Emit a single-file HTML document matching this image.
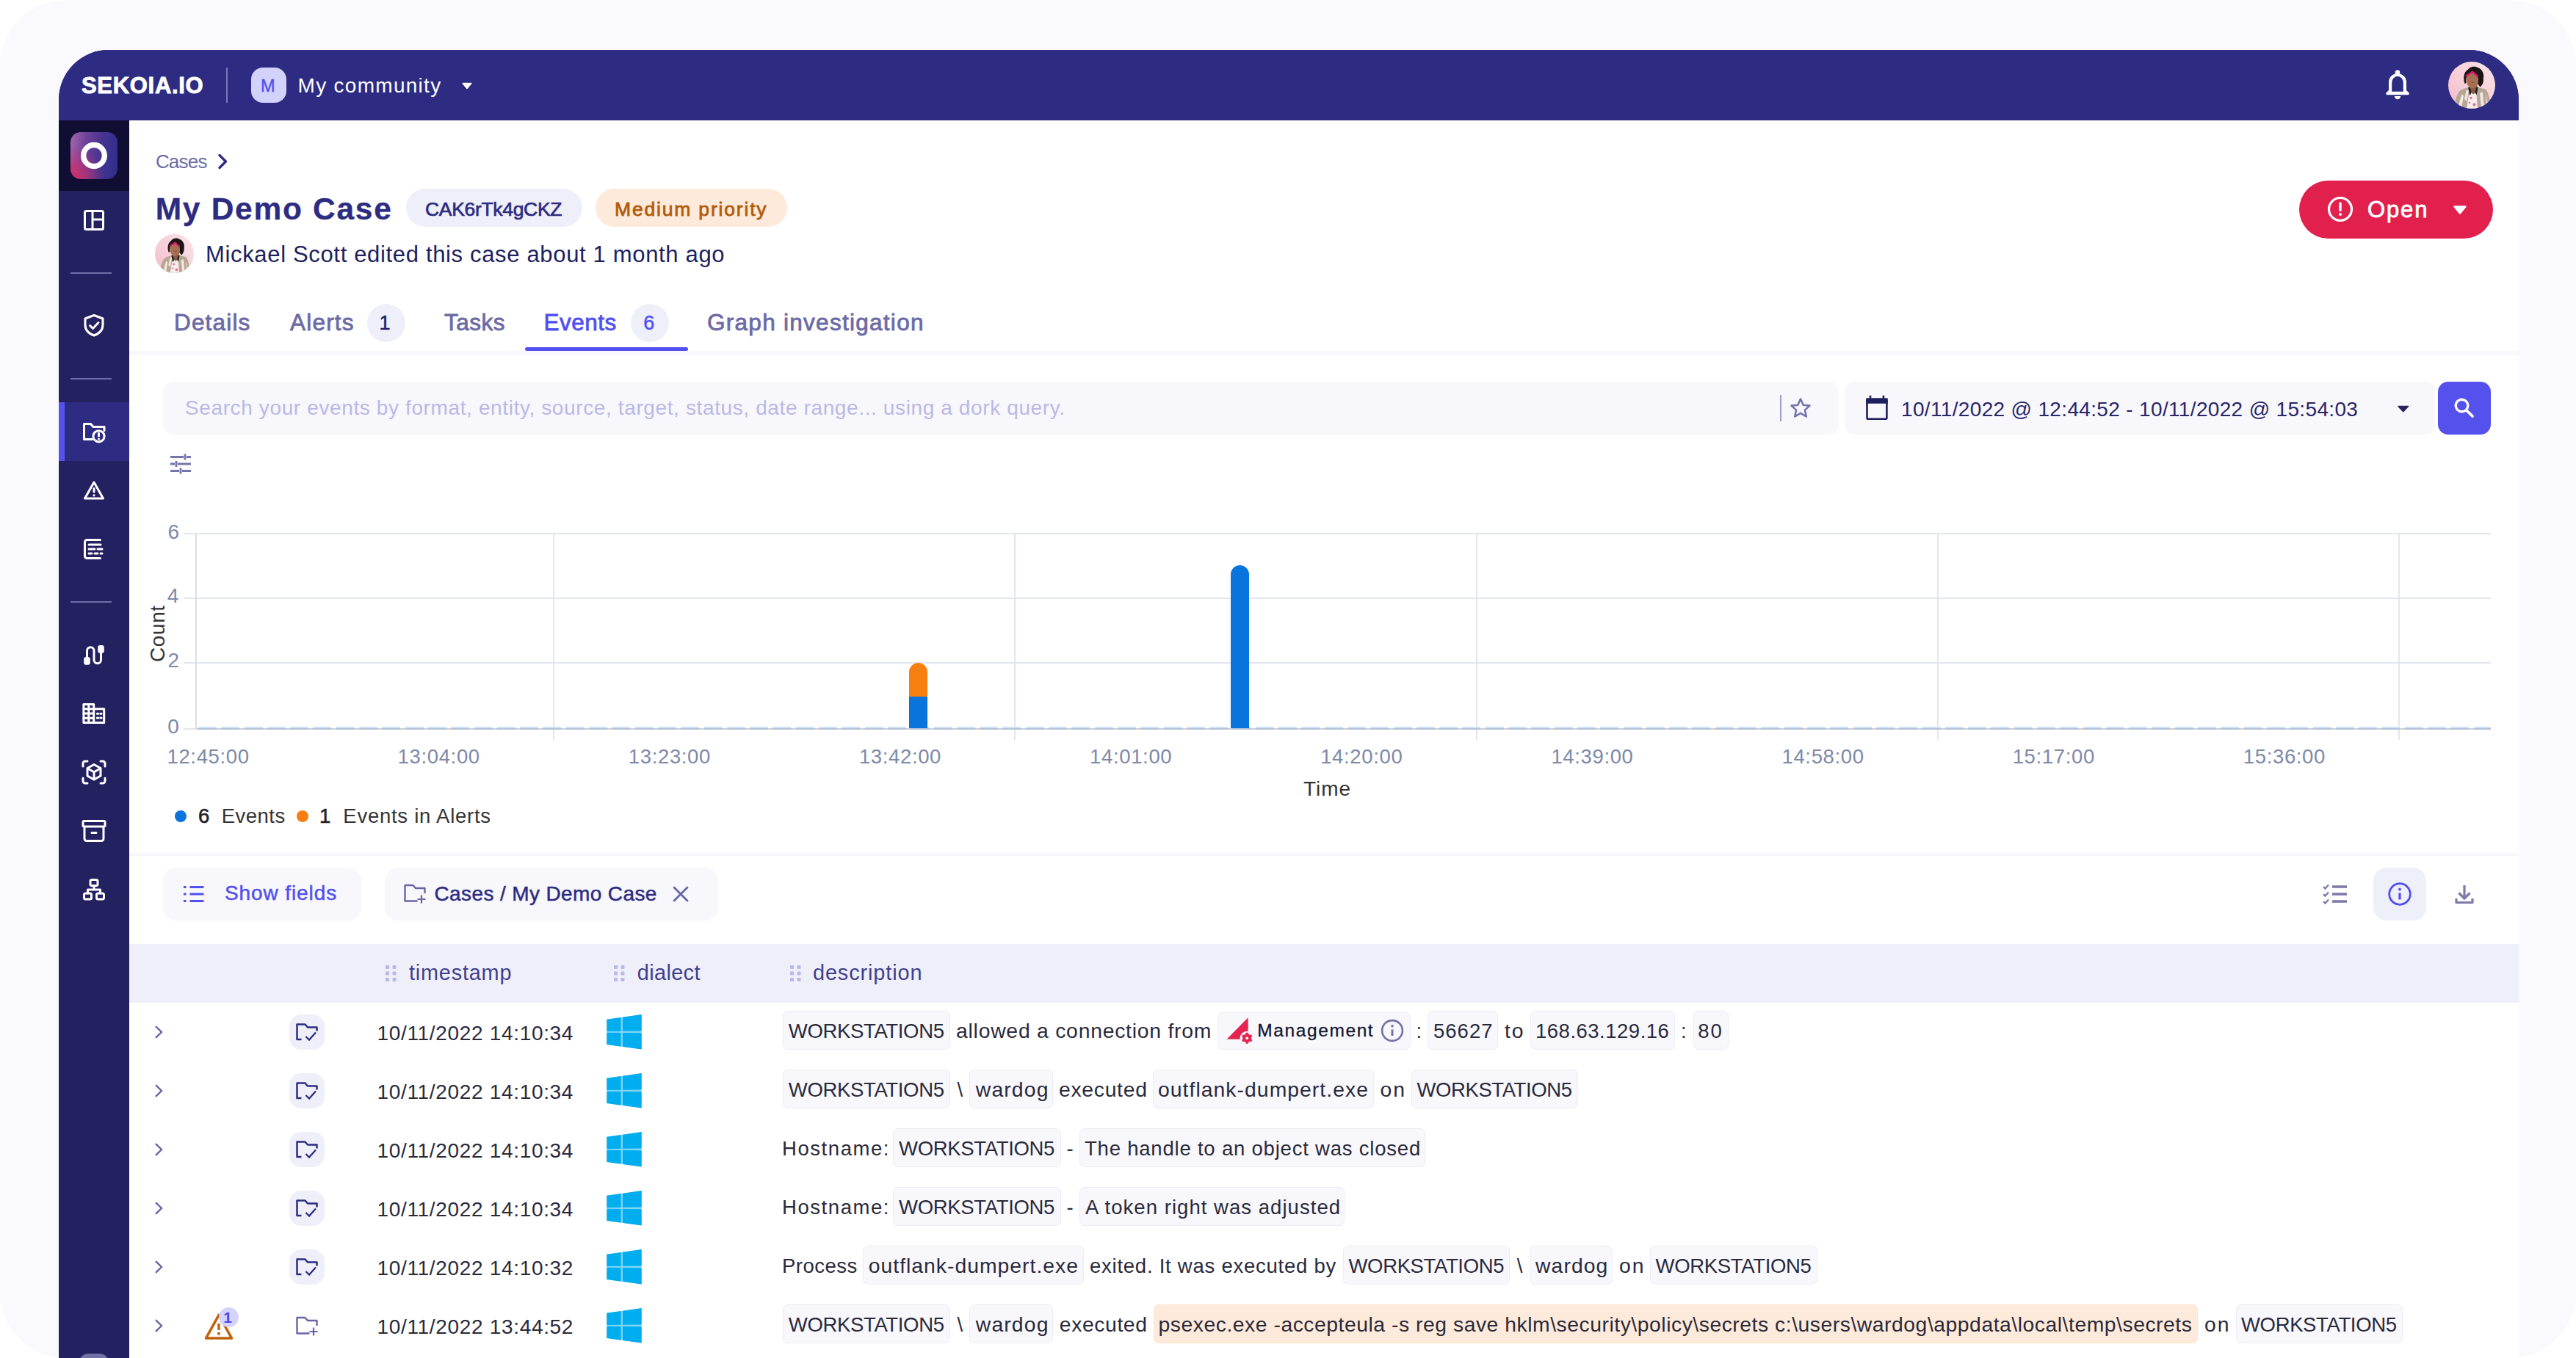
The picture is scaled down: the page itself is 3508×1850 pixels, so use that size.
<!DOCTYPE html>
<html lang="en"><head><meta charset="utf-8"><title>My Demo Case - SEKOIA.IO</title>
<style>
html,body{margin:0;padding:0;background:#fff;}
body{width:3508px;height:1850px;overflow:hidden;position:relative;font-family:'Liberation Sans',sans-serif;}
#stage{position:absolute;left:0;top:0;width:3508px;height:1850px;overflow:hidden;}
#stage div,#stage svg,#stage span{position:absolute;}
.t{white-space:pre;line-height:1;}
</style></head>
<body><div id="stage">
<div style="left:0px;top:0px;width:3508px;height:1850px;background:#fafafe;border-radius:90px;"></div>
<div style="left:80px;top:68px;width:3350px;height:1900px;border-radius:68px 68px 0 0;overflow:hidden;background:linear-gradient(#2d2c82 0,#2d2c82 96px,#fff 96px);">
<div style="left:0;top:0;width:3350px;height:96px;background:#2d2c82;"></div>
<div style="left:0;top:96px;width:96px;height:1800px;background:#232160;"></div>
<div style="left:0;top:96px;width:96px;height:96px;background:#100f33;"></div>
<div style="left:0;top:480px;width:96px;height:80px;background:#2d2c82;"></div>
<div style="left:0;top:480px;width:8px;height:80px;background:#5551ee;"></div>
</div>
<div style="left:308px;top:92px;width:2px;height:48px;background:#7a79b5;"></div>
<div style="left:342px;top:92px;width:48px;height:48px;background:#d3d2fb;border-radius:16px;"></div>
<svg style="left:629px;top:112px;" width="14" height="10" viewBox="0 0 14 10"><path d="M1.2 1.5h11.6L7 8.4z" fill="#fff" stroke="#fff" stroke-width="1.6" stroke-linejoin="round"/></svg>
<svg style="left:3245px;top:92px;" width="40" height="46" viewBox="0 0 40 46"><circle cx="20" cy="6.900" r="3.300" fill="#fff"/><path fill-rule="evenodd" fill="#fff" d="M8 31V20A12 12 0 0 1 32 20V31L35.300 34.300A1.700 1.700 0 0 1 34.100 37.200H5.900A1.700 1.700 0 0 1 4.700 34.300ZM12.200 32.800V20.500A7.800 8.500 0 0 1 27.800 20.500V32.800Z"/><path d="M15.800 39h8.400a4.200 4.200 0 0 1-8.400 0z" fill="#fff"/></svg>
<svg style="left:3334px;top:84px;" width="64" height="64" viewBox="0 0 64 64"><defs><linearGradient id="avg" x1="0" y1="1" x2="1" y2="0"><stop offset="0" stop-color="#f4bccb"/><stop offset=".55" stop-color="#f8d2db"/><stop offset="1" stop-color="#fbe4e9"/></linearGradient><clipPath id="avc"><circle cx="32" cy="32" r="32"/></clipPath></defs><g clip-path="url(#avc)"><rect width="64" height="64" fill="url(#avg)"/><path d="M8 64C9 52 12 42 18 38L27 35H40L51 37.500C55 42 57 52 58 64Z" fill="#b8a695"/><path d="M13 64l5-19 3 1-3 18zM22 51l3-13 3 1-3 15zM45 64l-2-21 4-2 2 23zM51 43l3 15-2 1z" fill="#efe7e0"/><path d="M28 45l5-5 5.500 5 1.500 19H25z" fill="#f7eded"/><circle cx="31" cy="49.500" r="1.700" fill="#e8748f"/><circle cx="35.500" cy="58.500" r="2.200" fill="#e8748f"/><circle cx="29" cy="56" r="1.300" fill="#e8748f"/><path d="M30 30h9.500v10l-5.500 4.500-4.500-4.500z" fill="#8b5842"/><path d="M27 35l2.500 11.500 2.200-4.500-2.200-7.500zM40.700 35l-2 10.500-2.200-4.500 2-6.500z" fill="#1f242b"/><path d="M22.500 30C20 22 21.500 14 26 11.500 29 6.500 36 5.500 40 8 46 9.500 49.500 17 47.800 23 48.500 28 46.500 32 43.500 34.500L40 30C41 24 40 19 37 17L26 19C24 22 24 26 24.500 29Z" fill="#1b1515"/><path d="M24.500 24.500C24.300 18.500 28 15.500 32 15.500 37 15.500 41 19 41 25 41 31 37.500 36.200 33 36.200 28 36.200 24.700 30.500 24.500 24.500Z" fill="#a87052"/><path d="M31 27.500c2 1 4 1 5.500-.5" stroke="#7b4a3a" stroke-width="1" fill="none"/><path d="M23.500 18.800L33 12.300 41.300 19.300 39.800 21.200 33 15.600 25 20.600Z" fill="#d6186f"/></g></svg>
<div style="left:96px;top:180px;width:64px;height:64px;border-radius:14px;background:radial-gradient(circle at 2% 100%,#d32b66 0%,rgba(205,45,105,.8) 14%,rgba(190,55,120,0) 50%),linear-gradient(97deg,#a666ae 0%,#6d4199 32%,#47348f 62%,#2d2d8d 100%);"></div>
<svg style="left:96px;top:180px;" width="64" height="64" viewBox="0 0 64 64"><ellipse cx="32" cy="32" rx="14.300" ry="14.500" fill="none" stroke="#fff" stroke-width="7.300"/></svg>
<svg style="left:112.0px;top:284.0px;" width="32" height="32" viewBox="0 0 32 32"><rect x="3.5" y="3.5" width="25" height="25" rx="2" fill="none" stroke="#fff" stroke-width="3" stroke-linecap="round" stroke-linejoin="round"/><path d="M14 3.5v25M14 15h14.5" fill="none" stroke="#fff" stroke-width="3" stroke-linecap="round" stroke-linejoin="round"/></svg>
<div style="left:96px;top:371px;width:56px;height:2px;background:#6f6ea6;"></div>
<svg style="left:112.0px;top:427.0px;" width="32" height="34" viewBox="0 0 32 34"><path d="M16 2.5l12 4.5v8.5c0 7-5 12-12 14.500c-7-2.500-12-7.500-12-14.500v-8.500z" fill="none" stroke="#fff" stroke-width="3" stroke-linecap="round" stroke-linejoin="round"/><path d="M10.500 16.500l4 4 7.500-8" fill="none" stroke="#fff" stroke-width="3" stroke-linecap="round" stroke-linejoin="round"/></svg>
<div style="left:96px;top:515px;width:56px;height:2px;background:#6f6ea6;"></div>
<svg style="left:111.0px;top:574.0px;" width="34" height="32" viewBox="0 0 34 32"><path d="M14.500 24.500h-11v-21h9l3.500 4h15v5" fill="none" stroke="#fff" stroke-width="3" stroke-linecap="round" stroke-linejoin="round"/><circle cx="23.500" cy="20.300" r="7.600" fill="none" stroke="#fff" stroke-width="3" stroke-linecap="round" stroke-linejoin="round" stroke-width="2.800"/><path d="M23.500 16.300v3.700" fill="none" stroke="#fff" stroke-width="3" stroke-linecap="round" stroke-linejoin="round" stroke-width="2.800"/><circle cx="23.500" cy="24" r="1.500" fill="#fff"/></svg>
<svg style="left:112.0px;top:653.0px;" width="32" height="30" viewBox="0 0 32 30"><path d="M16 4l12.500 22h-25z" fill="none" stroke="#fff" stroke-width="3" stroke-linecap="round" stroke-linejoin="round" stroke-width="3.200"/><path d="M16 12.500v4.500" fill="none" stroke="#fff" stroke-width="3" stroke-linecap="round" stroke-linejoin="round" stroke-width="2.800"/><circle cx="16" cy="21.800" r="1.600" fill="#fff"/></svg>
<svg style="left:112.0px;top:732.0px;" width="32" height="32" viewBox="0 0 32 32"><path d="M24.500 3.500h-18a3 3 0 0 0-3 3v19a3 3 0 0 0 3 3h18" fill="none" stroke="#fff" stroke-width="3" stroke-linecap="round" stroke-linejoin="round"/><path d="M9 10h16M9 16h8M21 16h6M9 22h4M17 22h4M25 22h2" fill="none" stroke="#fff" stroke-width="3" stroke-linecap="round" stroke-linejoin="round" stroke-width="2.600"/></svg>
<div style="left:96px;top:819px;width:56px;height:2px;background:#6f6ea6;"></div>
<svg style="left:112.0px;top:876.0px;" width="32" height="32" viewBox="0 0 32 32"><path d="M6.500 19.500V10.500a4.750 4.750 0 0 1 9.500 0V23a4.750 4.750 0 0 0 9.500 0V13" fill="none" stroke="#fff" stroke-width="3" stroke-linecap="round" stroke-linejoin="round"/><rect x="2.200" y="19" width="8.600" height="10.800" rx="3" fill="#fff"/><rect x="21.200" y="3" width="8.600" height="10.700" rx="3" fill="#fff"/></svg>
<svg style="left:112.0px;top:956.0px;" width="32" height="32" viewBox="0 0 32 32"><path d="M1.900 28.600V3.600h13.800v6.200h14v18.800z" fill="none" stroke="#fff" stroke-width="3" stroke-linecap="round" stroke-linejoin="round" stroke-width="2.800"/><path d="M8.800 3.600v25M1.900 9.850h13.800M1.900 16.100h13.800M1.900 22.350h13.800M15.700 9.800v18.800" fill="none" stroke="#fff" stroke-width="3" stroke-linecap="round" stroke-linejoin="round" stroke-width="2.500"/><path d="M20.300 16.200h1.400M24.700 16.200h1.400M20.300 22h1.400M24.700 22h1.400" fill="none" stroke="#fff" stroke-width="3" stroke-linecap="round" stroke-linejoin="round" stroke-width="2.800"/></svg>
<svg style="left:110.0px;top:1034.0px;" width="36" height="36" viewBox="0 0 36 36"><path d="M3 10v-4a3 3 0 0 1 3-3h3M27 3h3a3 3 0 0 1 3 3v4M33 26v4a3 3 0 0 1-3 3h-3M9 33h-3a3 3 0 0 1-3-3v-4" fill="none" stroke="#fff" stroke-width="3" stroke-linecap="round" stroke-linejoin="round"/><path d="M18 7.500l9 5v10.500l-9 5-9-5v-10.500z" fill="none" stroke="#fff" stroke-width="3" stroke-linecap="round" stroke-linejoin="round"/><path d="M9.500 13l8.500 4.800 8.500-4.800M18 17.800v10" fill="none" stroke="#fff" stroke-width="3" stroke-linecap="round" stroke-linejoin="round"/></svg>
<svg style="left:111.0px;top:1116.0px;" width="34" height="32" viewBox="0 0 34 32"><rect x="2" y="2.500" width="30" height="7.500" rx="1.500" fill="none" stroke="#fff" stroke-width="3" stroke-linecap="round" stroke-linejoin="round"/><path d="M4 10.500v16a3 3 0 0 0 3 3h20a3 3 0 0 0 3-3v-16" fill="none" stroke="#fff" stroke-width="3" stroke-linecap="round" stroke-linejoin="round"/><path d="M14 18.500h6" fill="none" stroke="#fff" stroke-width="3" stroke-linecap="round" stroke-linejoin="round"/></svg>
<svg style="left:112.0px;top:1196.0px;" width="32" height="32" viewBox="0 0 32 32"><rect x="11" y="2.500" width="10" height="8" rx="2" fill="none" stroke="#fff" stroke-width="3" stroke-linecap="round" stroke-linejoin="round"/><rect x="2.500" y="21" width="10" height="8" rx="2" fill="none" stroke="#fff" stroke-width="3" stroke-linecap="round" stroke-linejoin="round"/><rect x="19.500" y="21" width="10" height="8" rx="2" fill="none" stroke="#fff" stroke-width="3" stroke-linecap="round" stroke-linejoin="round"/><path d="M16 10.500v5.500M7.500 21v-5h17v5" fill="none" stroke="#fff" stroke-width="3" stroke-linecap="round" stroke-linejoin="round"/></svg>
<div style="left:107px;top:1844px;width:42px;height:40px;background:#7271a6;border-radius:14px;"></div>
<svg style="left:295px;top:208px;" width="16" height="24" viewBox="0 0 16 24"><path d="M4 3.500l8.500 8.500-8.500 8.500" fill="none" stroke="#2d2c82" stroke-width="3.400" stroke-linecap="round" stroke-linejoin="round"/></svg>
<div style="left:553px;top:257px;width:240px;height:52px;background:#efeffa;border-radius:26px;"></div>
<div style="left:811px;top:257px;width:261px;height:52px;background:#feeadb;border-radius:26px;"></div>
<svg style="left:211px;top:319px;" width="53" height="53" viewBox="0 0 64 64"><defs><linearGradient id="avg2" x1="0" y1="1" x2="1" y2="0"><stop offset="0" stop-color="#f4bccb"/><stop offset=".55" stop-color="#f8d2db"/><stop offset="1" stop-color="#fbe4e9"/></linearGradient><clipPath id="avc2"><circle cx="32" cy="32" r="32"/></clipPath></defs><g clip-path="url(#avc2)"><rect width="64" height="64" fill="url(#avg2)"/><path d="M8 64C9 52 12 42 18 38L27 35H40L51 37.500C55 42 57 52 58 64Z" fill="#b8a695"/><path d="M13 64l5-19 3 1-3 18zM22 51l3-13 3 1-3 15zM45 64l-2-21 4-2 2 23zM51 43l3 15-2 1z" fill="#efe7e0"/><path d="M28 45l5-5 5.500 5 1.500 19H25z" fill="#f7eded"/><circle cx="31" cy="49.500" r="1.700" fill="#e8748f"/><circle cx="35.500" cy="58.500" r="2.200" fill="#e8748f"/><circle cx="29" cy="56" r="1.300" fill="#e8748f"/><path d="M30 30h9.500v10l-5.500 4.500-4.500-4.500z" fill="#8b5842"/><path d="M27 35l2.500 11.500 2.200-4.500-2.200-7.500zM40.700 35l-2 10.500-2.200-4.500 2-6.500z" fill="#1f242b"/><path d="M22.500 30C20 22 21.500 14 26 11.500 29 6.500 36 5.500 40 8 46 9.500 49.500 17 47.800 23 48.500 28 46.500 32 43.500 34.500L40 30C41 24 40 19 37 17L26 19C24 22 24 26 24.500 29Z" fill="#1b1515"/><path d="M24.500 24.500C24.300 18.500 28 15.500 32 15.500 37 15.500 41 19 41 25 41 31 37.500 36.200 33 36.200 28 36.200 24.700 30.500 24.500 24.500Z" fill="#a87052"/><path d="M31 27.500c2 1 4 1 5.500-.5" stroke="#7b4a3a" stroke-width="1" fill="none"/><path d="M23.500 18.800L33 12.300 41.300 19.300 39.800 21.200 33 15.600 25 20.600Z" fill="#d6186f"/></g></svg>
<div style="left:3131px;top:246px;width:264px;height:79px;background:#e1204d;border-radius:40px;"></div>
<svg style="left:3168px;top:266px;" width="38" height="38" viewBox="0 0 38 38"><circle cx="19" cy="19" r="15.500" fill="none" stroke="#fff" stroke-width="3.200"/><path d="M19 11v9.500" stroke="#fff" stroke-width="3.400" stroke-linecap="round"/><circle cx="19" cy="26" r="2" fill="#fff"/></svg>
<svg style="left:3340px;top:279px;" width="20" height="14" viewBox="0 0 20 14"><path d="M2.500 2.500h15L10 11.500z" fill="#fff" stroke="#fff" stroke-width="2.400" stroke-linejoin="round"/></svg>
<div style="left:500px;top:414px;width:52px;height:52px;background:#efeffa;border-radius:26px;"></div>
<div style="left:859px;top:414px;width:52px;height:52px;background:#efeffa;border-radius:26px;"></div>
<div style="left:176px;top:478px;width:3254px;height:6px;background:#f7f7fc;"></div>
<div style="left:715px;top:472.5px;width:222px;height:5.5px;background:#5150f0;border-radius:3px;"></div>
<div style="left:222px;top:520px;width:2282px;height:72px;background:#f7f7fc;border-radius:14px;"></div>
<div style="left:2424px;top:538px;width:2px;height:36px;background:#9d9cc8;"></div>
<svg style="left:2436px;top:540px;" width="32" height="32" viewBox="0 0 32 32"><path d="M16 3.500l3.700 8.200 8.800 0.900-6.600 6 1.900 8.800-7.800-4.600-7.800 4.600 1.900-8.800-6.600-6 8.800-0.900z" fill="none" stroke="#7574ab" stroke-width="2.600" stroke-linejoin="round"/></svg>
<div style="left:2512px;top:520px;width:804px;height:72px;background:#f7f7fc;border-radius:14px;"></div>
<svg style="left:2539px;top:536px;" width="34" height="38" viewBox="0 0 34 38"><rect x="3.500" y="7.800" width="26.900" height="26.900" rx="1.500" fill="none" stroke="#1f1e5c" stroke-width="2.600"/><path d="M2.200 6.500h29.500v7.300h-29.500z" fill="#1f1e5c"/><path d="M8 2.800v4M25.900 2.800v4" stroke="#1f1e5c" stroke-width="2.600"/></svg>
<svg style="left:3263px;top:551px;" width="20" height="12" viewBox="0 0 20 12"><path d="M3 2.500h13.500l-6.750 7.200z" fill="#25245e" stroke="#25245e" stroke-width="1.600" stroke-linejoin="round"/></svg>
<div style="left:3320px;top:520px;width:72px;height:72px;background:#5551ec;border-radius:14px;"></div>
<svg style="left:3340px;top:540px;" width="32" height="32" viewBox="0 0 32 32"><circle cx="12.500" cy="12.500" r="8.300" fill="none" stroke="#fff" stroke-width="3.400"/><path d="M18.800 18.800l8.200 8.200" stroke="#fff" stroke-width="3.800" stroke-linecap="round"/></svg>
<svg style="left:230px;top:617px;" width="32" height="30" viewBox="0 0 32 30"><path d="M2 5.500h18M24 5.500h6M22 1.500v8M2 15h6M12 15h18M10 11v8M2 24.500h12M18 24.500h12M16 20.500v8" stroke="#7574ab" stroke-width="2.800" fill="none"/></svg>
<div style="left:250px;top:726px;width:3142px;height:2px;background:#e4e6ef;"></div>
<div style="left:250px;top:813.5px;width:3142px;height:2px;background:#e4e6ef;"></div>
<div style="left:250px;top:901.5px;width:3142px;height:2px;background:#e4e6ef;"></div>
<div style="left:250px;top:992.3px;width:17px;height:1.7px;background:#e6e6ec;"></div>
<div style="left:267px;top:992.3px;width:3125px;height:1.7px;background:#cfcfd3;"></div>
<div style="left:266px;top:727px;width:2px;height:266px;background:#dcdde6;"></div>
<div style="left:753px;top:727px;width:2px;height:281px;background:#e4e6ef;"></div>
<div style="left:1381px;top:727px;width:2px;height:281px;background:#e4e6ef;"></div>
<div style="left:2009.5px;top:727px;width:2px;height:281px;background:#e4e6ef;"></div>
<div style="left:2638px;top:727px;width:2px;height:281px;background:#e4e6ef;"></div>
<div style="left:3266px;top:727px;width:2px;height:281px;background:#e4e6ef;"></div>
<div style="left:269.500px;top:990px;width:3122.500px;height:2.300px;background:repeating-linear-gradient(90deg,#cfe3f8 0,#cfe3f8 25px,transparent 25px,transparent 31.300px);"></div>
<div style="left:269.500px;top:992.300px;width:3122.500px;height:1.700px;background:repeating-linear-gradient(90deg,#b2c2d8 0,#b2c2d8 25px,transparent 25px,transparent 31.300px);"></div>
<span class="t" style="left:200.500px;top:901.500px;font-size:28px;color:#333;transform-origin:0 0;transform:rotate(-90deg);letter-spacing:0.6px;">Count</span>
<div style="left:1238px;top:948px;width:25px;height:44px;background:#0a74dd;"></div>
<div style="left:1238px;top:903px;width:25px;height:46px;background:#f77f11;border-radius:12.500px 12.500px 0 0;"></div>
<div style="left:1676px;top:770px;width:25px;height:222px;background:#0a74dd;border-radius:12.500px 12.500px 0 0;"></div>
<div style="left:237.5px;top:1103.75px;width:16.5px;height:16.5px;background:#0a74dd;border-radius:9px;"></div>
<div style="left:403.75px;top:1103.75px;width:16.5px;height:16.5px;background:#f77f11;border-radius:9px;"></div>
<div style="left:176px;top:1162px;width:3254px;height:4px;background:#f7f7fc;"></div>
<div style="left:222px;top:1182px;width:270px;height:72px;background:#f7f7fc;border-radius:18px;"></div>
<svg style="left:249px;top:1204px;" width="30" height="28" viewBox="0 0 30 28"><path d="M9.500 4.500h19M9.500 14h19M9.500 23.500h19" stroke="#5150f0" stroke-width="2.800"/><path d="M1 4.500h3.500M1 14h3.500M1 23.500h3.500" stroke="#5150f0" stroke-width="2.800"/></svg>
<div style="left:524px;top:1182px;width:454px;height:72px;background:#f7f7fc;border-radius:18px;"></div>
<svg style="left:548px;top:1203px;" width="34" height="30" viewBox="0 0 34 30"><path d="M20.500 24.500h-17v-21.500h11l3.500 4h12.500v7" fill="none" stroke="#6665a5" stroke-width="2.400" stroke-linejoin="round"/><path d="M26 16.500v11M20.500 22h11" stroke="#6665a5" stroke-width="2.200"/></svg>
<svg style="left:915px;top:1206px;" width="24" height="24" viewBox="0 0 24 24"><path d="M3 3l18 18M21 3l-18 18" stroke="#6665a5" stroke-width="2.800" stroke-linecap="round"/></svg>
<svg style="left:3162px;top:1203px;" width="36" height="30" viewBox="0 0 36 30"><path d="M14 5h20M14 15h20M14 25h20" stroke="#7b7aa9" stroke-width="3.600"/><path d="M2 5l2.500 2.500 4.500-5M2 15l2.500 2.500 4.500-5M2 25l2.500 2.500 4.500-5" fill="none" stroke="#7b7aa9" stroke-width="2.400"/></svg>
<div style="left:3232px;top:1182px;width:72px;height:72px;background:#efeffa;border-radius:18px;"></div>
<svg style="left:3250px;top:1200px;" width="36" height="36" viewBox="0 0 36 36"><circle cx="18" cy="18" r="14.300" fill="none" stroke="#4f4cf0" stroke-width="2.800"/><path d="M18 16.500v9" stroke="#4f4cf0" stroke-width="3.200"/><circle cx="18" cy="11.500" r="1.900" fill="#4f4cf0"/></svg>
<svg style="left:3342px;top:1204px;" width="28" height="28" viewBox="0 0 28 28"><path d="M14 2v17M6.500 12.500l7.500 7.500 7.500-7.500M3 20v5.500h22v-5.500" fill="none" stroke="#7b7aa9" stroke-width="3.200" stroke-linejoin="round"/></svg>
<div style="left:176px;top:1286px;width:3254px;height:80px;background:#efeffa;"></div>
<svg style="left:524px;top:1314px;" width="17" height="24" viewBox="0 0 17 24"><rect x="1" y="1" width="5" height="5" rx="1" fill="#b9b8ea"/><rect x="1" y="9.5" width="5" height="5" rx="1" fill="#b9b8ea"/><rect x="1" y="18" width="5" height="5" rx="1" fill="#b9b8ea"/><rect x="10.5" y="1" width="5" height="5" rx="1" fill="#b9b8ea"/><rect x="10.5" y="9.5" width="5" height="5" rx="1" fill="#b9b8ea"/><rect x="10.5" y="18" width="5" height="5" rx="1" fill="#b9b8ea"/></svg>
<svg style="left:835px;top:1314px;" width="17" height="24" viewBox="0 0 17 24"><rect x="1" y="1" width="5" height="5" rx="1" fill="#b9b8ea"/><rect x="1" y="9.5" width="5" height="5" rx="1" fill="#b9b8ea"/><rect x="1" y="18" width="5" height="5" rx="1" fill="#b9b8ea"/><rect x="10.5" y="1" width="5" height="5" rx="1" fill="#b9b8ea"/><rect x="10.5" y="9.5" width="5" height="5" rx="1" fill="#b9b8ea"/><rect x="10.5" y="18" width="5" height="5" rx="1" fill="#b9b8ea"/></svg>
<svg style="left:1075px;top:1314px;" width="17" height="24" viewBox="0 0 17 24"><rect x="1" y="1" width="5" height="5" rx="1" fill="#b9b8ea"/><rect x="1" y="9.5" width="5" height="5" rx="1" fill="#b9b8ea"/><rect x="1" y="18" width="5" height="5" rx="1" fill="#b9b8ea"/><rect x="10.5" y="1" width="5" height="5" rx="1" fill="#b9b8ea"/><rect x="10.5" y="9.5" width="5" height="5" rx="1" fill="#b9b8ea"/><rect x="10.5" y="18" width="5" height="5" rx="1" fill="#b9b8ea"/></svg>
<svg style="left:209px;top:1395px;" width="16" height="22" viewBox="0 0 16 22"><path d="M3 3.200l8 7.800-8 7.800" fill="none" stroke="#6665a5" stroke-width="2.400"/></svg>
<div style="left:394px;top:1382px;width:48px;height:48px;background:#efeffa;border-radius:16px;"></div>
<svg style="left:401px;top:1391px;" width="34" height="30" viewBox="0 0 34 30"><path d="M9.500 25h-6v-20.500h11l3.500 4h12.500v5" fill="none" stroke="#2d2c82" stroke-width="2.500" stroke-linejoin="round"/><path d="M15.500 21l4.500 4.500 9-10" fill="none" stroke="#2d2c82" stroke-width="2.300"/></svg>
<svg style="left:826px;top:1382px;overflow:visible;" width="48" height="47.5" viewBox="0 0 87.400 87.400"><path d="M0.500 12.600L87 0.500V87L0.500 75.200z" fill="#7fd5f6"/><path d="M0 12.402 35.687 7.500l.016 34.423-35.670.203zm35.670 33.529.028 34.453L.028 75.480.026 45.700zm4.326-39.025L87.314 0v41.527l-47.318.376zm47.329 39.349-.011 41.340-47.318-6.678-.066-34.739z" fill="#00adef"/></svg>
<svg style="left:209px;top:1475px;" width="16" height="22" viewBox="0 0 16 22"><path d="M3 3.200l8 7.800-8 7.800" fill="none" stroke="#6665a5" stroke-width="2.400"/></svg>
<div style="left:394px;top:1462px;width:48px;height:48px;background:#efeffa;border-radius:16px;"></div>
<svg style="left:401px;top:1471px;" width="34" height="30" viewBox="0 0 34 30"><path d="M9.500 25h-6v-20.500h11l3.500 4h12.500v5" fill="none" stroke="#2d2c82" stroke-width="2.500" stroke-linejoin="round"/><path d="M15.500 21l4.500 4.500 9-10" fill="none" stroke="#2d2c82" stroke-width="2.300"/></svg>
<svg style="left:826px;top:1462px;overflow:visible;" width="48" height="47.5" viewBox="0 0 87.400 87.400"><path d="M0.500 12.600L87 0.500V87L0.500 75.200z" fill="#7fd5f6"/><path d="M0 12.402 35.687 7.500l.016 34.423-35.670.203zm35.670 33.529.028 34.453L.028 75.480.026 45.700zm4.326-39.025L87.314 0v41.527l-47.318.376zm47.329 39.349-.011 41.340-47.318-6.678-.066-34.739z" fill="#00adef"/></svg>
<svg style="left:209px;top:1555px;" width="16" height="22" viewBox="0 0 16 22"><path d="M3 3.200l8 7.800-8 7.800" fill="none" stroke="#6665a5" stroke-width="2.400"/></svg>
<div style="left:394px;top:1542px;width:48px;height:48px;background:#efeffa;border-radius:16px;"></div>
<svg style="left:401px;top:1551px;" width="34" height="30" viewBox="0 0 34 30"><path d="M9.500 25h-6v-20.500h11l3.500 4h12.500v5" fill="none" stroke="#2d2c82" stroke-width="2.500" stroke-linejoin="round"/><path d="M15.500 21l4.500 4.500 9-10" fill="none" stroke="#2d2c82" stroke-width="2.300"/></svg>
<svg style="left:826px;top:1542px;overflow:visible;" width="48" height="47.5" viewBox="0 0 87.400 87.400"><path d="M0.500 12.600L87 0.500V87L0.500 75.200z" fill="#7fd5f6"/><path d="M0 12.402 35.687 7.500l.016 34.423-35.670.203zm35.670 33.529.028 34.453L.028 75.480.026 45.700zm4.326-39.025L87.314 0v41.527l-47.318.376zm47.329 39.349-.011 41.340-47.318-6.678-.066-34.739z" fill="#00adef"/></svg>
<svg style="left:209px;top:1635px;" width="16" height="22" viewBox="0 0 16 22"><path d="M3 3.200l8 7.800-8 7.800" fill="none" stroke="#6665a5" stroke-width="2.400"/></svg>
<div style="left:394px;top:1622px;width:48px;height:48px;background:#efeffa;border-radius:16px;"></div>
<svg style="left:401px;top:1631px;" width="34" height="30" viewBox="0 0 34 30"><path d="M9.500 25h-6v-20.500h11l3.500 4h12.500v5" fill="none" stroke="#2d2c82" stroke-width="2.500" stroke-linejoin="round"/><path d="M15.500 21l4.500 4.500 9-10" fill="none" stroke="#2d2c82" stroke-width="2.300"/></svg>
<svg style="left:826px;top:1622px;overflow:visible;" width="48" height="47.5" viewBox="0 0 87.400 87.400"><path d="M0.500 12.600L87 0.500V87L0.500 75.200z" fill="#7fd5f6"/><path d="M0 12.402 35.687 7.500l.016 34.423-35.670.203zm35.670 33.529.028 34.453L.028 75.480.026 45.700zm4.326-39.025L87.314 0v41.527l-47.318.376zm47.329 39.349-.011 41.340-47.318-6.678-.066-34.739z" fill="#00adef"/></svg>
<svg style="left:209px;top:1715px;" width="16" height="22" viewBox="0 0 16 22"><path d="M3 3.200l8 7.800-8 7.800" fill="none" stroke="#6665a5" stroke-width="2.400"/></svg>
<div style="left:394px;top:1702px;width:48px;height:48px;background:#efeffa;border-radius:16px;"></div>
<svg style="left:401px;top:1711px;" width="34" height="30" viewBox="0 0 34 30"><path d="M9.500 25h-6v-20.500h11l3.500 4h12.500v5" fill="none" stroke="#2d2c82" stroke-width="2.500" stroke-linejoin="round"/><path d="M15.500 21l4.500 4.500 9-10" fill="none" stroke="#2d2c82" stroke-width="2.300"/></svg>
<svg style="left:826px;top:1702px;overflow:visible;" width="48" height="47.5" viewBox="0 0 87.400 87.400"><path d="M0.500 12.600L87 0.500V87L0.500 75.200z" fill="#7fd5f6"/><path d="M0 12.402 35.687 7.500l.016 34.423-35.670.203zm35.670 33.529.028 34.453L.028 75.480.026 45.700zm4.326-39.025L87.314 0v41.527l-47.318.376zm47.329 39.349-.011 41.340-47.318-6.678-.066-34.739z" fill="#00adef"/></svg>
<svg style="left:209px;top:1795px;" width="16" height="22" viewBox="0 0 16 22"><path d="M3 3.200l8 7.800-8 7.800" fill="none" stroke="#6665a5" stroke-width="2.400"/></svg>
<svg style="left:401px;top:1792px;" width="34" height="30" viewBox="0 0 34 30"><path d="M20.500 24.500h-17v-21.500h11l3.500 4h12.500v7" fill="none" stroke="#6665a5" stroke-width="2.400" stroke-linejoin="round"/><path d="M26 16.500v11M20.500 22h11" stroke="#6665a5" stroke-width="2.200"/></svg>
<svg style="left:826px;top:1782px;overflow:visible;" width="48" height="47.5" viewBox="0 0 87.400 87.400"><path d="M0.500 12.600L87 0.500V87L0.500 75.200z" fill="#7fd5f6"/><path d="M0 12.402 35.687 7.500l.016 34.423-35.670.203zm35.670 33.529.028 34.453L.028 75.480.026 45.700zm4.326-39.025L87.314 0v41.527l-47.318.376zm47.329 39.349-.011 41.340-47.318-6.678-.066-34.739z" fill="#00adef"/></svg>
<svg style="left:277px;top:1788px;" width="42" height="38" viewBox="0 0 42 38"><path d="M21 3.500l17.500 31.500h-35z" fill="none" stroke="#c1600a" stroke-width="3.600" stroke-linejoin="round"/><path d="M21 15v9" stroke="#c1600a" stroke-width="3.400"/><rect x="19.200" y="27" width="3.600" height="3.600" fill="#c1600a"/></svg>
<div style="left:297.5px;top:1780.5px;width:27px;height:27px;background:#d4d3fb;border-radius:14px;"></div>
<div style="left:1066px;top:1376.5px;width:226px;height:51.5px;background:#f7f7fc;border:1px solid #ececf7;border-radius:7px;"></div>
<div style="left:1658px;top:1379px;width:261px;height:49px;background:#f7f7fc;border:1px solid #ececf7;border-radius:7px;"></div>
<svg style="left:1668px;top:1384px;" width="40" height="40" viewBox="0 0 40 40"><path d="M31.600 2.200V31.800H2.600z" fill="#e5244f"/><circle cx="30.200" cy="30.300" r="9.600" fill="#f7f7fc"/><circle cx="30.200" cy="30.300" r="4.300" fill="none" stroke="#e5244f" stroke-width="3.400"/><path d="M30.200 22.800v15M23.700 26.550l13 7.500M23.700 34.050l13-7.500" stroke="#e5244f" stroke-width="3.200"/><circle cx="30.200" cy="30.300" r="1.900" fill="#f7f7fc"/></svg>
<svg style="left:1879.3px;top:1386.8px;" width="34" height="34" viewBox="0 0 34 34"><circle cx="17" cy="17" r="13.900" fill="none" stroke="#7170a8" stroke-width="2.600"/><path d="M17 15.500v8.500" stroke="#7170a8" stroke-width="3"/><circle cx="17" cy="10.800" r="1.800" fill="#7170a8"/></svg>
<div style="left:1944px;top:1376.5px;width:93.5px;height:51.5px;background:#f7f7fc;border:1px solid #ececf7;border-radius:7px;"></div>
<div style="left:2084px;top:1376.5px;width:194.5px;height:51.5px;background:#f7f7fc;border:1px solid #ececf7;border-radius:7px;"></div>
<div style="left:2305.5px;top:1376.5px;width:46.0px;height:51.5px;background:#f7f7fc;border:1px solid #ececf7;border-radius:7px;"></div>
<div style="left:1066px;top:1456.5px;width:226px;height:51.5px;background:#f7f7fc;border:1px solid #ececf7;border-radius:7px;"></div>
<div style="left:1320px;top:1456.5px;width:111.5px;height:51.5px;background:#f7f7fc;border:1px solid #ececf7;border-radius:7px;"></div>
<div style="left:1569.5px;top:1456.5px;width:299.5px;height:51.5px;background:#f7f7fc;border:1px solid #ececf7;border-radius:7px;"></div>
<div style="left:1922px;top:1456.5px;width:225px;height:51.5px;background:#f7f7fc;border:1px solid #ececf7;border-radius:7px;"></div>
<div style="left:1215.75px;top:1536.5px;width:227.25px;height:51.5px;background:#f7f7fc;border:1px solid #ececf7;border-radius:7px;"></div>
<div style="left:1469.5px;top:1536.5px;width:469.5px;height:51.5px;background:#f7f7fc;border:1px solid #ececf7;border-radius:7px;"></div>
<div style="left:1215.75px;top:1616.5px;width:227.25px;height:51.5px;background:#f7f7fc;border:1px solid #ececf7;border-radius:7px;"></div>
<div style="left:1469.5px;top:1616.5px;width:359.5px;height:51.5px;background:#f7f7fc;border:1px solid #ececf7;border-radius:7px;"></div>
<div style="left:1174.5px;top:1696.5px;width:299.25px;height:51.5px;background:#f7f7fc;border:1px solid #ececf7;border-radius:7px;"></div>
<div style="left:1828.75px;top:1696.5px;width:224.75px;height:51.5px;background:#f7f7fc;border:1px solid #ececf7;border-radius:7px;"></div>
<div style="left:2082.5px;top:1696.5px;width:111.0px;height:51.5px;background:#f7f7fc;border:1px solid #ececf7;border-radius:7px;"></div>
<div style="left:2247px;top:1696.5px;width:226px;height:51.5px;background:#f7f7fc;border:1px solid #ececf7;border-radius:7px;"></div>
<div style="left:1066px;top:1776.5px;width:226px;height:51.5px;background:#f7f7fc;border:1px solid #ececf7;border-radius:7px;"></div>
<div style="left:1320px;top:1776.5px;width:111.5px;height:51.5px;background:#f7f7fc;border:1px solid #ececf7;border-radius:7px;"></div>
<div style="left:1570.5px;top:1776.5px;width:1420.5px;height:51.5px;background:#feeadb;border:1px solid #fde3cf;border-radius:7px;"></div>
<div style="left:3044.5px;top:1776.5px;width:225.0px;height:51.5px;background:#f7f7fc;border:1px solid #ececf7;border-radius:7px;"></div>
<span class="t" style="left:111.0px;top:101.3px;font-size:31px;color:#fff;font-weight:700;letter-spacing:0.69px;-webkit-text-stroke:0.9px #fff;">SEKOIA.IO</span>
<span class="t" style="left:355.0px;top:105.9px;font-size:23.5px;color:#5250f2;-webkit-text-stroke:0.4px #5250f2;">M</span>
<span class="t" style="left:405.6px;top:103.3px;font-size:28px;color:#fff;letter-spacing:1.28px;">My community</span>
<span class="t" style="left:211.9px;top:207.0px;font-size:26px;color:#6b6ba6;letter-spacing:-0.80px;">Cases</span>
<span class="t" style="left:211.7px;top:264.0px;font-size:42.5px;color:#2d2c82;font-weight:700;letter-spacing:1.71px;-webkit-text-stroke:0.3px #2d2c82;">My Demo Case</span>
<span class="t" style="left:579.0px;top:271.6px;font-size:26.5px;color:#2d2c82;letter-spacing:-0.32px;-webkit-text-stroke:0.7px #2d2c82;">CAK6rTk4gCKZ</span>
<span class="t" style="left:837.0px;top:271.6px;font-size:26.5px;color:#b35c0b;letter-spacing:1.82px;-webkit-text-stroke:0.8px #b35c0b;">Medium priority</span>
<span class="t" style="left:280.0px;top:330.8px;font-size:31px;color:#201f5e;letter-spacing:0.66px;">Mickael Scott edited this case about 1 month ago</span>
<span class="t" style="left:3224.0px;top:270.3px;font-size:31px;color:#fff;letter-spacing:1.87px;-webkit-text-stroke:0.8px #fff;">Open</span>
<span class="t" style="left:237.0px;top:424.3px;font-size:31.5px;color:#6b6ba6;letter-spacing:1.17px;-webkit-text-stroke:0.8px #6b6ba6;">Details</span>
<span class="t" style="left:395.0px;top:424.3px;font-size:31.5px;color:#6b6ba6;letter-spacing:1.20px;-webkit-text-stroke:0.8px #6b6ba6;">Alerts</span>
<span class="t" style="left:516.5px;top:426.6px;font-size:27px;color:#201f6e;-webkit-text-stroke:0.5px #201f6e;">1</span>
<span class="t" style="left:605.0px;top:424.3px;font-size:31.5px;color:#6b6ba6;letter-spacing:0.50px;-webkit-text-stroke:0.8px #6b6ba6;">Tasks</span>
<span class="t" style="left:740.5px;top:424.3px;font-size:31.5px;color:#5150f0;letter-spacing:0.50px;-webkit-text-stroke:0.8px #5150f0;">Events</span>
<span class="t" style="left:876.2px;top:426.6px;font-size:27px;color:#5150f0;-webkit-text-stroke:0.5px #5150f0;">6</span>
<span class="t" style="left:963.0px;top:424.3px;font-size:31.5px;color:#6b6ba6;letter-spacing:1.28px;-webkit-text-stroke:0.8px #6b6ba6;">Graph investigation</span>
<span class="t" style="left:252.0px;top:542.3px;font-size:28px;color:#bab9e6;letter-spacing:0.62px;">Search your events by format, entity, source, target, status, date range... using a dork query.</span>
<span class="t" style="left:2589.0px;top:544.3px;font-size:28px;color:#272666;letter-spacing:0.34px;">10/11/2022 @ 12:44:52 - 10/11/2022 @ 15:54:03</span>
<span class="t" style="left:228.5px;top:710.8px;font-size:28px;color:#7d89a8;">6</span>
<span class="t" style="left:227.8px;top:798.3px;font-size:28px;color:#7d89a8;">4</span>
<span class="t" style="left:228.5px;top:886.3px;font-size:28px;color:#7d89a8;">2</span>
<span class="t" style="left:228.2px;top:976.3px;font-size:28px;color:#7d89a8;">0</span>
<span class="t" style="left:227.5px;top:1016.7px;font-size:27.5px;color:#7d89a8;letter-spacing:0.64px;">12:45:00</span>
<span class="t" style="left:541.6px;top:1016.7px;font-size:27.5px;color:#7d89a8;letter-spacing:0.64px;">13:04:00</span>
<span class="t" style="left:855.8px;top:1016.7px;font-size:27.5px;color:#7d89a8;letter-spacing:0.64px;">13:23:00</span>
<span class="t" style="left:1169.9px;top:1016.7px;font-size:27.5px;color:#7d89a8;letter-spacing:0.64px;">13:42:00</span>
<span class="t" style="left:1484.1px;top:1016.7px;font-size:27.5px;color:#7d89a8;letter-spacing:0.64px;">14:01:00</span>
<span class="t" style="left:1798.2px;top:1016.7px;font-size:27.5px;color:#7d89a8;letter-spacing:0.64px;">14:20:00</span>
<span class="t" style="left:2112.4px;top:1016.7px;font-size:27.5px;color:#7d89a8;letter-spacing:0.64px;">14:39:00</span>
<span class="t" style="left:2426.5px;top:1016.7px;font-size:27.5px;color:#7d89a8;letter-spacing:0.64px;">14:58:00</span>
<span class="t" style="left:2740.7px;top:1016.7px;font-size:27.5px;color:#7d89a8;letter-spacing:0.64px;">15:17:00</span>
<span class="t" style="left:3054.8px;top:1016.7px;font-size:27.5px;color:#7d89a8;letter-spacing:0.64px;">15:36:00</span>
<span class="t" style="left:1775.0px;top:1060.8px;font-size:28px;color:#333;letter-spacing:1.00px;">Time</span>
<span class="t" style="left:270.0px;top:1098.4px;font-size:27.5px;color:#222;-webkit-text-stroke:0.6px #222;">6</span>
<span class="t" style="left:301.7px;top:1098.4px;font-size:27.5px;color:#333;letter-spacing:0.50px;">Events</span>
<span class="t" style="left:435.1px;top:1098.4px;font-size:27.5px;color:#222;-webkit-text-stroke:0.6px #222;">1</span>
<span class="t" style="left:467.3px;top:1098.4px;font-size:27.5px;color:#333;letter-spacing:0.75px;">Events in Alerts</span>
<span class="t" style="left:306.0px;top:1203.3px;font-size:28px;color:#5150f0;letter-spacing:0.90px;-webkit-text-stroke:0.5px #5150f0;">Show fields</span>
<span class="t" style="left:591.5px;top:1203.8px;font-size:28px;color:#2d2c82;letter-spacing:0.38px;-webkit-text-stroke:0.5px #2d2c82;">Cases / My Demo Case</span>
<span class="t" style="left:557.0px;top:1310.6px;font-size:28.84px;color:#403f8e;letter-spacing:0.81px;">timestamp</span>
<span class="t" style="left:867.8px;top:1310.6px;font-size:28.84px;color:#403f8e;letter-spacing:0.38px;">dialect</span>
<span class="t" style="left:1107.0px;top:1310.6px;font-size:28.84px;color:#403f8e;letter-spacing:0.90px;">description</span>
<span class="t" style="left:513.5px;top:1393.8px;font-size:28px;color:#2a2a3a;letter-spacing:0.67px;">10/11/2022 14:10:34</span>
<span class="t" style="left:513.5px;top:1473.8px;font-size:28px;color:#2a2a3a;letter-spacing:0.67px;">10/11/2022 14:10:34</span>
<span class="t" style="left:513.5px;top:1553.8px;font-size:28px;color:#2a2a3a;letter-spacing:0.67px;">10/11/2022 14:10:34</span>
<span class="t" style="left:513.5px;top:1633.8px;font-size:28px;color:#2a2a3a;letter-spacing:0.67px;">10/11/2022 14:10:34</span>
<span class="t" style="left:513.5px;top:1713.8px;font-size:28px;color:#2a2a3a;letter-spacing:0.67px;">10/11/2022 14:10:32</span>
<span class="t" style="left:513.5px;top:1793.8px;font-size:28px;color:#2a2a3a;letter-spacing:0.67px;">10/11/2022 13:44:52</span>
<span class="t" style="left:304.2px;top:1784.2px;font-size:21px;color:#4b48e8;font-weight:700;">1</span>
<span class="t" style="left:1073.8px;top:1390.5px;font-size:27.5px;color:#2a2a3a;letter-spacing:-0.34px;">WORKSTATION5</span>
<span class="t" style="left:1302.0px;top:1389.8px;font-size:28.32px;color:#2a2a3a;letter-spacing:0.77px;">allowed a connection from</span>
<span class="t" style="left:1712.2px;top:1391.8px;font-size:24.5px;color:#15152a;letter-spacing:1.61px;-webkit-text-stroke:0.3px #15152a;">Management</span>
<span class="t" style="left:1928.5px;top:1390.5px;font-size:27.5px;color:#2a2a3a;">:</span>
<span class="t" style="left:1952.0px;top:1390.5px;font-size:27.5px;color:#2a2a3a;letter-spacing:1.00px;">56627</span>
<span class="t" style="left:2048.9px;top:1389.8px;font-size:28.32px;color:#2a2a3a;letter-spacing:2.00px;">to</span>
<span class="t" style="left:2091.0px;top:1390.5px;font-size:27.5px;color:#2a2a3a;letter-spacing:0.50px;">168.63.129.16</span>
<span class="t" style="left:2289.0px;top:1390.5px;font-size:27.5px;color:#2a2a3a;">:</span>
<span class="t" style="left:2312.3px;top:1390.5px;font-size:27.5px;color:#2a2a3a;letter-spacing:2.00px;">80</span>
<span class="t" style="left:1073.8px;top:1470.5px;font-size:27.5px;color:#2a2a3a;letter-spacing:-0.34px;">WORKSTATION5</span>
<span class="t" style="left:1303.5px;top:1470.5px;font-size:27.5px;color:#2a2a3a;">\</span>
<span class="t" style="left:1328.8px;top:1469.8px;font-size:28.32px;color:#2a2a3a;letter-spacing:1.15px;">wardog</span>
<span class="t" style="left:1442.0px;top:1469.8px;font-size:28.32px;color:#2a2a3a;letter-spacing:0.71px;">executed</span>
<span class="t" style="left:1577.0px;top:1469.8px;font-size:28.32px;color:#2a2a3a;letter-spacing:1.05px;">outflank-dumpert.exe</span>
<span class="t" style="left:1879.5px;top:1469.8px;font-size:28.32px;color:#2a2a3a;letter-spacing:2.00px;">on</span>
<span class="t" style="left:1929.5px;top:1470.5px;font-size:27.5px;color:#2a2a3a;letter-spacing:-0.41px;">WORKSTATION5</span>
<span class="t" style="left:1065.0px;top:1550.5px;font-size:27.5px;color:#2a2a3a;letter-spacing:1.56px;">Hostname:</span>
<span class="t" style="left:1224.0px;top:1550.5px;font-size:27.5px;color:#2a2a3a;letter-spacing:-0.32px;">WORKSTATION5</span>
<span class="t" style="left:1452.5px;top:1550.5px;font-size:27.5px;color:#2a2a3a;">-</span>
<span class="t" style="left:1477.0px;top:1550.5px;font-size:27.5px;color:#2a2a3a;letter-spacing:0.79px;">The handle to an object was closed</span>
<span class="t" style="left:1065.0px;top:1630.5px;font-size:27.5px;color:#2a2a3a;letter-spacing:1.56px;">Hostname:</span>
<span class="t" style="left:1224.0px;top:1630.5px;font-size:27.5px;color:#2a2a3a;letter-spacing:-0.32px;">WORKSTATION5</span>
<span class="t" style="left:1452.5px;top:1630.5px;font-size:27.5px;color:#2a2a3a;">-</span>
<span class="t" style="left:1478.0px;top:1630.5px;font-size:27.5px;color:#2a2a3a;letter-spacing:1.04px;">A token right was adjusted</span>
<span class="t" style="left:1065.0px;top:1710.5px;font-size:27.5px;color:#2a2a3a;letter-spacing:0.50px;">Process</span>
<span class="t" style="left:1182.8px;top:1709.8px;font-size:28.32px;color:#2a2a3a;letter-spacing:1.01px;">outflank-dumpert.exe</span>
<span class="t" style="left:1484.0px;top:1710.5px;font-size:27.5px;color:#2a2a3a;letter-spacing:0.75px;">exited. It was executed by</span>
<span class="t" style="left:1836.5px;top:1710.5px;font-size:27.5px;color:#2a2a3a;letter-spacing:-0.36px;">WORKSTATION5</span>
<span class="t" style="left:2065.8px;top:1710.5px;font-size:27.5px;color:#2a2a3a;">\</span>
<span class="t" style="left:2091.0px;top:1709.8px;font-size:28.32px;color:#2a2a3a;letter-spacing:1.10px;">wardog</span>
<span class="t" style="left:2205.0px;top:1709.8px;font-size:28.32px;color:#2a2a3a;letter-spacing:2.00px;">on</span>
<span class="t" style="left:2254.5px;top:1710.5px;font-size:27.5px;color:#2a2a3a;letter-spacing:-0.32px;">WORKSTATION5</span>
<span class="t" style="left:1073.8px;top:1790.5px;font-size:27.5px;color:#2a2a3a;letter-spacing:-0.34px;">WORKSTATION5</span>
<span class="t" style="left:1303.5px;top:1790.5px;font-size:27.5px;color:#2a2a3a;">\</span>
<span class="t" style="left:1328.8px;top:1789.8px;font-size:28.32px;color:#2a2a3a;letter-spacing:1.15px;">wardog</span>
<span class="t" style="left:1442.8px;top:1789.8px;font-size:28.32px;color:#2a2a3a;letter-spacing:0.61px;">executed</span>
<span class="t" style="left:1577.5px;top:1789.8px;font-size:28.32px;color:#2a2a3a;letter-spacing:0.53px;">psexec.exe -accepteula -s reg save hklm\security\policy\secrets c:\users\wardog\appdata\local\temp\secrets</span>
<span class="t" style="left:3002.0px;top:1789.8px;font-size:28.32px;color:#2a2a3a;letter-spacing:2.00px;">on</span>
<span class="t" style="left:3052.0px;top:1790.5px;font-size:27.5px;color:#2a2a3a;letter-spacing:-0.36px;">WORKSTATION5</span>
</div></body></html>
